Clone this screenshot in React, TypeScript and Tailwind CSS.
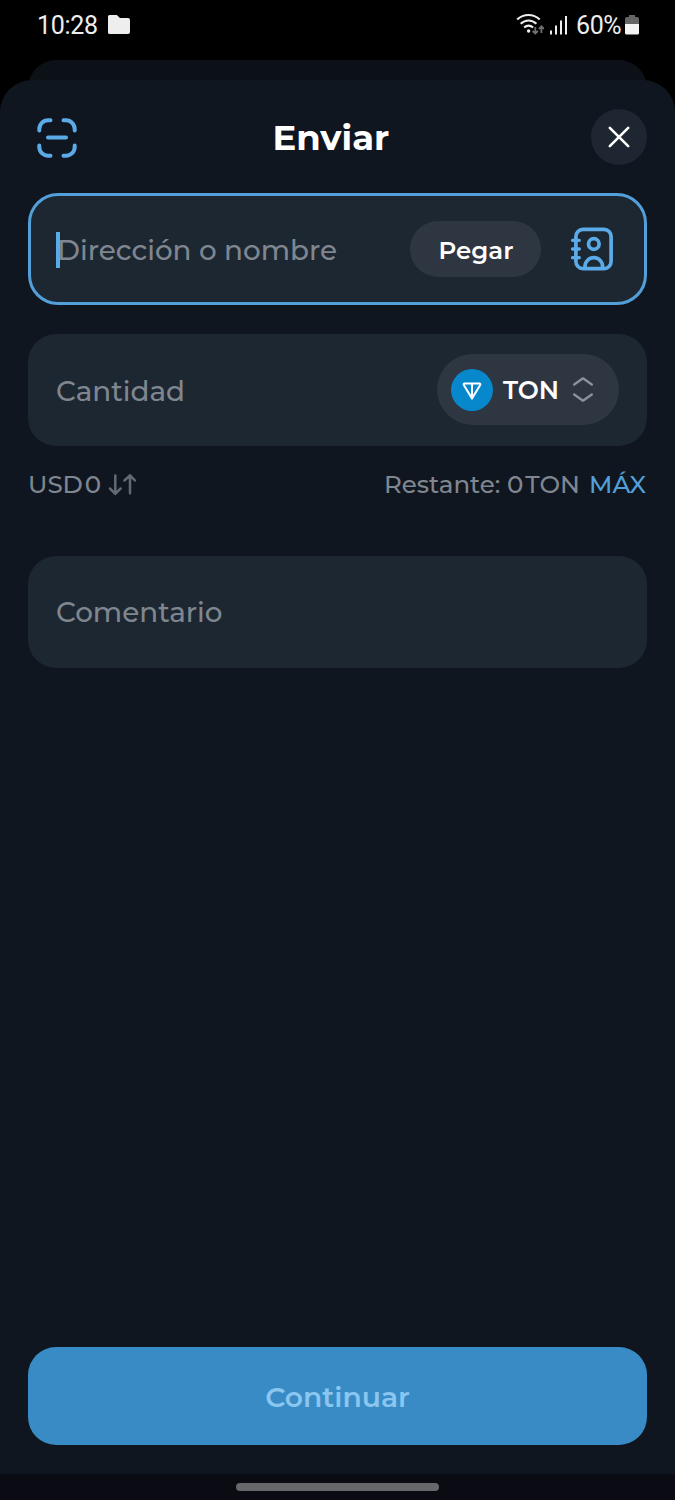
import React from 'react';

const ScanIcon: React.FC = () => (
  <svg className="w-10 h-10" viewBox="0 0 40 40" fill="none" stroke="#5cabe9" strokeWidth="4" strokeLinecap="round">
    <path d="M2.3 12.5V11A8.7 8.7 0 0 1 11 2.3h2.5M26.5 2.3H29A8.7 8.7 0 0 1 37.7 11v1.5M37.7 27.5V29a8.7 8.7 0 0 1-8.7 8.7h-2.5M13.5 37.7H11A8.7 8.7 0 0 1 2.3 29v-1.5M11 19.5h18" />
  </svg>
);

const CloseIcon: React.FC = () => (
  <svg className="w-6 h-6" viewBox="0 0 24 24" fill="none" stroke="#fff" strokeWidth="2.6" strokeLinecap="round">
    <path d="M2.8 2.8l18.4 18.4M21.2 2.8L2.8 21.2" />
  </svg>
);

const ContactsIcon: React.FC = () => (
  <svg className="w-11 h-11" viewBox="0 0 44 44" fill="none" stroke="#5cabe9" strokeWidth="3.7" strokeLinecap="round">
    <rect x="5.9" y="2.4" width="35.2" height="39.2" rx="7" />
    <circle cx="23.8" cy="17" r="5.3" />
    <path d="M15 41v-1.5a8.8 8.8 0 0 1 17.6 0V41" />
    <path d="M2.5 13.3h6.8M2.5 22h6.8M2.5 30.7h6.8" strokeWidth="3.3" />
  </svg>
);

const TonIcon: React.FC = () => (
  <svg className="w-[42px] h-[42px]" viewBox="0 0 42 42" fill="none">
    <circle cx="21" cy="21" r="21" fill="#0788cc" />
    <path d="M13.6 14.4h14.8c.8 0 1.2.8.8 1.5L21 29.600l-8.200-13.700c-.4-.7 0-1.500.8-1.500zM21 14.400v15" stroke="#fff" strokeWidth="2" strokeLinejoin="round" />
  </svg>
);

const SelectorIcon: React.FC = () => (
  <svg className="w-[22px] h-[26px]" viewBox="0 0 22 26" fill="none" stroke="#8d939d" strokeWidth="2.3" strokeLinecap="round" strokeLinejoin="round">
    <path d="M2.2 7.5L11 1.3 19.8 7.5M2.2 17.5L11 23.7 19.8 17.5" />
  </svg>
);

const SwapIcon: React.FC = () => (
  <svg className="w-7 h-[22px]" viewBox="0 0 28 22" fill="none" stroke="#626973" strokeWidth="2.5" strokeLinecap="round" strokeLinejoin="round">
    <path d="M7.3 1.5v18M2 14.5l5.3 5.3 5.3-5.3M22 19.3V1.3M16.4 6.5L22 1.3l5 5.2" />
  </svg>
);

const StatusBar: React.FC = () => (
  <div className="h-[60px] pl-[37px] pr-9 pt-3 flex justify-between items-start font-['Roboto',sans-serif] text-[25px] leading-7 text-[#eeeeee]">
    <div className="flex items-center">
      <span className="w-[61px] whitespace-nowrap tracking-[-0.3px]">10:28</span>
      <svg className="w-[22px] h-[19px] ml-[10px] mb-[3px]" viewBox="0 0 22 19" fill="#eeeeee">
        <path d="M1.5 0h7.3l3.2 3H20a2 2 0 0 1 2 2v12a2 2 0 0 1-2 2H1.5A1.5 1.5 0 0 1 0 17.5v-16A1.5 1.5 0 0 1 1.5 0z" />
      </svg>
    </div>
    <div className="flex items-center">
      <svg className="w-7 h-[22px] mb-1" viewBox="0 0 28 22" fill="none">
        <path d="M1.2 6.5c6.5-6 16-6 22.5 0M4.7 10.7c4.7-4.3 11-4.3 15.7 0M8.1 14.5c2.7-2.3 6.3-2.3 9 0" stroke="#eee" strokeWidth="2.2" />
        <circle cx="12.6" cy="18" r="1.7" fill="#eee" />
        <path d="M19.3 14v6.5m-2.6-2.5l2.6 2.6 2.6-2.6M25.4 20v-6.5m-2.5 2.5l2.5-2.6 2.5 2.6" stroke="#707070" strokeWidth="1.8" />
      </svg>
      <svg className="w-[17px] h-5 ml-[6px] mb-[3px]" viewBox="0 0 17 20" stroke="#eee" strokeWidth="2">
        <path d="M1 15.5V19.5M6 10.5V19.5M11 5.5V19.5M16 1V19.5" />
      </svg>
      <span className="ml-[9px] w-[46px] whitespace-nowrap tracking-[-0.4px]">60%</span>
      <svg className="w-[14px] h-5 ml-[3px] mb-[3px]" viewBox="0 0 14 20">
        <path d="M4 0h6v2h2a2 2 0 0 1 2 2v6H0V4a2 2 0 0 1 2-2h2z" fill="#666" />
        <path d="M0 9h14v9a1.5 1.5 0 0 1-1.5 1.5h-11A1.5 1.5 0 0 1 0 18z" fill="#f4f4f4" />
      </svg>
    </div>
  </div>
);

const App: React.FC = () => {
  return (
    <div className="w-full h-[1500px] flex flex-col overflow-hidden bg-black font-['Montserrat','Inter',sans-serif]">
      <StatusBar />

      {/* Edge of the sheet underneath */}
      <div className="h-[60px] mx-7 -mb-10 shrink-0 rounded-t-[28px] bg-[#0c1117]" />

      <div className="flex-1 flex flex-col rounded-t-[32px] bg-[#0f161f] px-7 relative">
        {/* Header */}
        <div className="mt-[29px] h-14 flex items-center justify-between">
          <button className="w-14 h-14 pl-px pt-px flex items-center justify-center"><ScanIcon /></button>
          <h1 className="w-[116px] mr-[14px] pt-px whitespace-nowrap text-[35.4px] leading-10 font-bold text-white">Enviar</h1>
          <button className="w-14 h-14 rounded-full bg-[#1e2631] flex items-center justify-center"><CloseIcon /></button>
        </div>

        {/* Recipient */}
        <div className="mt-7 h-28 shrink-0 rounded-[30px] border-3 border-[#529fd9] bg-[#1d2731] pl-[26px] pr-[30px] flex items-center">
          <div className="relative flex-1 pt-px text-[27.8px] leading-9 font-medium text-[#7f8690] whitespace-nowrap">
            <span>Dirección o nombre</span>
            <span className="absolute -left-px top-px w-[4px] h-9 bg-[#5cabe9]" />
          </div>
          <button className="w-[131px] h-14 pt-[3px] pl-px rounded-full bg-[#2e3642] text-[24.5px] font-semibold text-white">Pegar</button>
          <button className="ml-[29px]"><ContactsIcon /></button>
        </div>

        {/* Amount */}
        <div className="mt-[29px] h-28 shrink-0 rounded-[28px] bg-[#1d2731] px-7 flex items-center justify-between text-[27.8px] font-medium text-[#7f8690]">
          <span className="pt-[3px]">Cantidad</span>
          <button className="w-[182px] h-[71px] mb-px rounded-full bg-[#2e3642] pl-[14px] flex items-center">
            <TonIcon />
            <span className="ml-[10px] pt-[2px] w-14 text-left whitespace-nowrap text-[25px] font-semibold text-white">TON</span>
            <span className="ml-[13px]"><SelectorIcon /></span>
          </button>
        </div>
        <div className="mt-5 h-9 pt-px flex items-center justify-between text-[24.5px] font-medium text-[#7f8690]">
          <div className="flex items-center">
            <span className="w-[74px] whitespace-nowrap">USD<span className="ml-[2px]">0</span></span>
            <span className="ml-[6px]"><SwapIcon /></span>
          </div>
          <div className="flex whitespace-nowrap">
            <span className="w-[197px]">Restante: 0<span className="ml-[2px]">TON</span></span>
            <span className="ml-[8px] w-[58px] text-[#529fd9]">MÁX</span>
          </div>
        </div>

        {/* Comment */}
        <div className="mt-[54px] h-28 shrink-0 rounded-[28px] bg-[#1d2731] px-7 flex items-center text-[27.8px] font-medium text-[#7f8690]">
          <span className="pt-[2px]">Comentario</span>
        </div>

        <button className="mt-auto mb-[29px] h-[98px] pt-[2px] shrink-0 rounded-[28px] bg-[#388bc4] text-[28.2px] font-semibold text-[#8ac6f0]">
          Continuar
        </button>
      </div>

      {/* Gesture bar */}
      <div className="h-[26px] shrink-0 bg-[#0b0c13] flex items-center justify-center">
        <div className="w-[203px] h-2 rounded-full bg-[#66686c]" />
      </div>
    </div>
  );
};

export default App;
